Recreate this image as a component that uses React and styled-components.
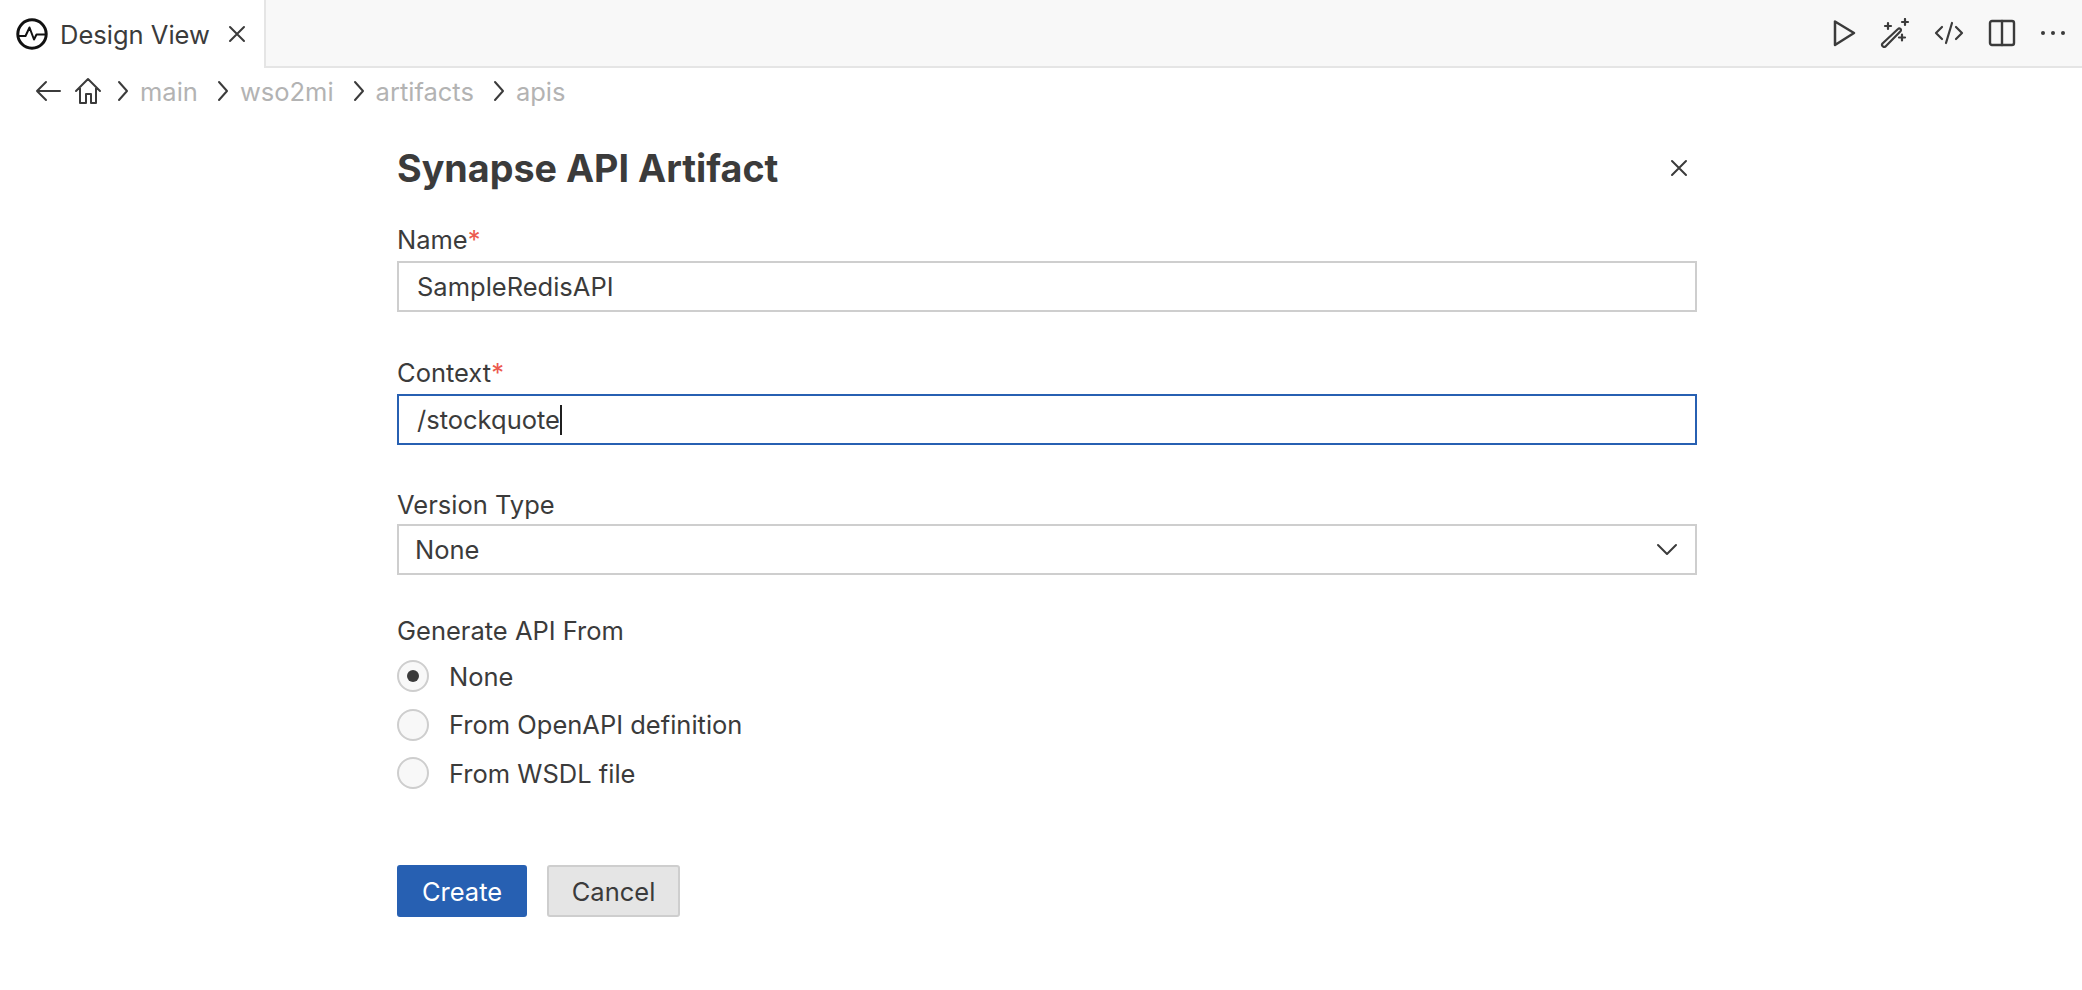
import React from 'react';
import styled, { createGlobalStyle } from 'styled-components';

const GlobalStyle = createGlobalStyle`
    html, body {
        margin: 0;
        padding: 0;
        background: #fff;
        color: #3b3b3b;
        font-family: Inter, "Liberation Sans", sans-serif;
    }
`;

const Page = styled.div`
    width: 2082px;
    height: 990px;
    overflow: hidden;
    display: flex;
    flex-direction: column;
`;

const TabBar = styled.div`
    height: 66px;
    flex: none;
    display: flex;
    justify-content: space-between;
    background: #f8f8f8;
    border-bottom: 2px solid #e5e5e5;
`;

const Tab = styled.div`
    width: 266px;
    height: 68px;
    box-sizing: border-box;
    padding-left: 16px;
    display: flex;
    align-items: center;
    background: #fff;
    border-right: 2px solid #e5e5e5;
    font-size: 25.5px;
`;

const TabTitle = styled.span`
    margin-left: 12px;
    margin-right: 17px;
`;

const Toolbar = styled.div`
    display: flex;
    align-items: center;
    gap: 24px;
    padding-right: 16px;
`;

const Breadcrumb = styled.div`
    height: 46px;
    flex: none;
    padding-left: 34px;
    display: flex;
    align-items: center;
    font-size: 25.5px;
    color: #b3b3b3;
`;

const NavSpacer = styled.span`
    width: ${p => p.$width}px;
`;

const Crumb = styled.span`
    margin: 0 18px 0 10px;
`;

const FormWrap = styled.div`
    width: 1300px;
    margin-left: 397px;
`;

const Header = styled.div`
    display: flex;
    justify-content: space-between;
    align-items: center;
    height: 50px;
    margin-top: 29px;
`;

const Title = styled.h1`
    margin: 0;
    font-size: 37.7px;
    font-weight: 700;
    color: #3b3b3b;
`;

const CloseButton = styled.div`
    display: flex;
    margin-right: 8px;
`;

const Field = styled.div`
    margin-top: ${p => p.$top}px;
`;

const Label = styled.div`
    font-size: 25.5px;
    line-height: 30px;
    margin-bottom: ${p => p.$gap ?? 6}px;
`;

const Required = styled.span`
    color: #ec5a4f;
`;

const InputBox = styled.div`
    height: 51px;
    box-sizing: border-box;
    padding-left: ${p => p.$pad || 18}px;
    padding-right: 17px;
    display: flex;
    align-items: center;
    justify-content: ${p => (p.$select ? 'space-between' : 'flex-start')};
    border: 2px solid ${p => (p.$focused ? '#2760b2' : '#cecece')};
    font-size: 25.5px;
`;

const Caret = styled.span`
    width: 2px;
    height: 30px;
    background: #1f1f1f;
`;

const RadioList = styled.div`
    display: flex;
    flex-direction: column;
    gap: 16.5px;
    margin-top: 14px;
`;

const RadioRow = styled.div`
    display: flex;
    align-items: center;
    gap: 20px;
    height: 32px;
    font-size: 25.5px;
`;

const RadioCircle = styled.span`
    width: 32px;
    height: 32px;
    box-sizing: border-box;
    border-radius: 50%;
    border: 2px solid #cecece;
    background: #f8f8f8;
    display: flex;
    align-items: center;
    justify-content: center;
`;

const RadioDot = styled.span`
    width: 12px;
    height: 12px;
    border-radius: 50%;
    background: #3b3b3b;
`;

const Actions = styled.div`
    display: flex;
    gap: 20px;
    margin-top: 76px;
`;

const Button = styled.div`
    width: ${p => p.$width}px;
    height: 52px;
    box-sizing: border-box;
    border-radius: 3px;
    display: flex;
    align-items: center;
    justify-content: center;
    font-size: 25.5px;
    background: ${p => (p.$primary ? '#2760b2' : '#e5e5e5')};
    color: ${p => (p.$primary ? '#fff' : '#3b3b3b')};
    border: 2px solid ${p => (p.$primary ? '#2760b2' : '#cecece')};
`;

const line = {
    fill: 'none',
    stroke: '#3b3b3b',
    strokeWidth: 2,
    strokeLinecap: 'round',
    strokeLinejoin: 'round',
};

const PulseIcon = () => (
    <svg width="32" height="32" viewBox="0 0 32 32">
        <circle cx="16" cy="16" r="14.2" fill="none" stroke="#111" strokeWidth="3" />
        <path d="M2.5 18H9.5L13.5 9.5L18 21.5L20.5 16.5H29.5" fill="none" stroke="#111" strokeWidth="2" strokeLinejoin="round" />
    </svg>
);

const CloseIcon = ({ size = 20 }) => (
    <svg width={size} height={size} viewBox="0 0 20 20">
        <path d="M3 3L17 17M17 3L3 17" {...line} />
    </svg>
);

const PlayIcon = () => (
    <svg width="24" height="28" viewBox="0 0 24 28">
        <path d="M3 2.5V26L22 14Z" {...line} strokeWidth="2.5" />
    </svg>
);

const WandIcon = () => (
    <svg width="30" height="30" viewBox="0 0 30 30">
        <path d="M2.5 25.5L18 11C19.5 9.5 22 11.5 20.5 13.2L5.5 28.5C3.5 30 1 27.5 2.5 25.5Z" {...line} strokeWidth="2.2" />
        <path d="M8 5V11M5 8H11M25 1V7M22 4H28M22 16.5V22.5M19 19.5H25" {...line} strokeWidth="2.2" />
    </svg>
);

const CodeIcon = () => (
    <svg width="30" height="24" viewBox="0 0 30 24">
        <path d="M8 6L2 12L8 18M22 6L28 12L22 18M18 2L12 22" {...line} strokeWidth="2.2" />
    </svg>
);

const SplitIcon = () => (
    <svg width="28" height="28" viewBox="0 0 28 28">
        <rect x="2" y="2" width="24" height="24" rx="2" {...line} strokeWidth="2.4" />
        <path d="M14 2V26" {...line} strokeWidth="2.4" />
    </svg>
);

const DotsIcon = () => (
    <svg width="26" height="8" viewBox="0 0 26 8">
        <circle cx="3" cy="4" r="2" fill="#3b3b3b" />
        <circle cx="13" cy="4" r="2" fill="#3b3b3b" />
        <circle cx="23" cy="4" r="2" fill="#3b3b3b" />
    </svg>
);

const BackIcon = () => (
    <svg width="28" height="24" viewBox="0 0 28 24">
        <path d="M3 12H26M12 3L3 12L12 21" {...line} />
    </svg>
);

const HomeIcon = () => (
    <svg width="28" height="28" viewBox="0 0 28 28">
        <path d="M2 14L14 2L26 14M6 11V26H12V17H17V26H22V11" {...line} />
    </svg>
);

const ChevronIcon = () => (
    <svg width="14" height="22" viewBox="0 0 14 22">
        <path d="M3 2L11 11L3 20" {...line} />
    </svg>
);

const DownIcon = () => (
    <svg width="22" height="14" viewBox="0 0 22 14">
        <path d="M2 2L11 11L20 2" {...line} />
    </svg>
);

const crumbs = ['main', 'wso2mi', 'artifacts', 'apis'];
const options = ['None', 'From OpenAPI definition', 'From WSDL file'];

export default function App() {
    return (
        <Page>
            <GlobalStyle />
            <TabBar>
                <Tab>
                    <PulseIcon />
                    <TabTitle>Design View</TabTitle>
                    <CloseIcon />
                </Tab>
                <Toolbar>
                    <PlayIcon />
                    <WandIcon />
                    <CodeIcon />
                    <SplitIcon />
                    <DotsIcon />
                </Toolbar>
            </TabBar>
            <Breadcrumb>
                <BackIcon />
                <NavSpacer $width={12} />
                <HomeIcon />
                <NavSpacer $width={14} />
                {crumbs.map(name => (
                    <React.Fragment key={name}>
                        <ChevronIcon />
                        <Crumb>{name}</Crumb>
                    </React.Fragment>
                ))}
            </Breadcrumb>
            <FormWrap>
                <Header>
                    <Title>Synapse API Artifact</Title>
                    <CloseButton>
                        <CloseIcon />
                    </CloseButton>
                </Header>
                <Field $top={32}>
                    <Label>Name<Required>*</Required></Label>
                    <InputBox>SampleRedisAPI</InputBox>
                </Field>
                <Field $top={46}>
                    <Label>Context<Required>*</Required></Label>
                    <InputBox $focused>/stockquote<Caret /></InputBox>
                </Field>
                <Field $top={45}>
                    <Label $gap={4}>Version Type</Label>
                    <InputBox $select $pad={16}>
                        None
                        <DownIcon />
                    </InputBox>
                </Field>
                <Field $top={41}>
                    <Label>Generate API From</Label>
                    <RadioList>
                        {options.map((option, i) => (
                            <RadioRow key={option}>
                                <RadioCircle>{i === 0 && <RadioDot />}</RadioCircle>
                                {option}
                            </RadioRow>
                        ))}
                    </RadioList>
                </Field>
                <Actions>
                    <Button $primary $width={130}>Create</Button>
                    <Button $width={133}>Cancel</Button>
                </Actions>
            </FormWrap>
        </Page>
    );
}
